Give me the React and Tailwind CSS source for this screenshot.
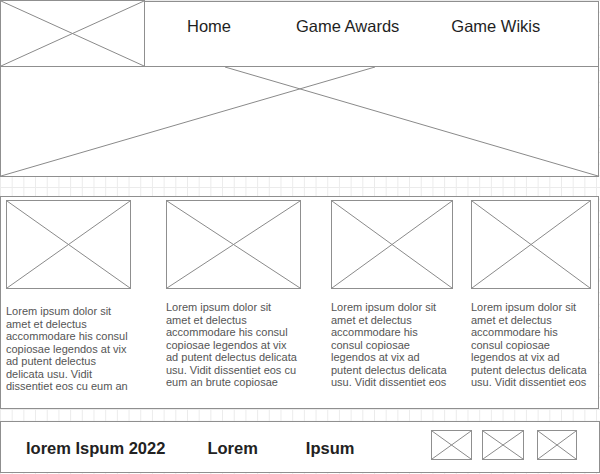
const font = { fontFamily: '"Liberation Sans", Arial, sans-serif' }

function Cross({ stroke = '#8a8a8a' }) {
  return (
    <svg className="absolute inset-0 h-full w-full" viewBox="0 0 100 100" preserveAspectRatio="none">
      <line x1="0" y1="0" x2="100" y2="100" stroke={stroke} strokeWidth="1" vectorEffect="non-scaling-stroke" />
      <line x1="100" y1="0" x2="0" y2="100" stroke={stroke} strokeWidth="1" vectorEffect="non-scaling-stroke" />
    </svg>
  )
}

function Placeholder({ className = '' }) {
  return (
    <div className={`relative shrink-0 border border-[#8f8f8f] bg-white ${className}`}>
      <Cross />
    </div>
  )
}

// wireframe copy, broken where the mockup breaks it
const cards = [
  {
    w: 'w-[125px]',
    ml: 'ml-[5px]',
    textTop: 'mt-[16px]',
    lines: [
      'Lorem ipsum dolor sit',
      'amet et delectus',
      'accommodare his consul',
      'copiosae legendos at vix',
      'ad putent delectus',
      'delicata usu. Vidit',
      'dissentiet eos cu eum an',
    ],
  },
  {
    w: 'w-[135px]',
    ml: 'ml-[35px]',
    textTop: 'mt-[12px]',
    lines: [
      'Lorem ipsum dolor sit',
      'amet et delectus',
      'accommodare his consul',
      'copiosae legendos at vix',
      'ad putent delectus delicata',
      'usu. Vidit dissentiet eos cu',
      'eum an brute copiosae',
    ],
  },
  {
    w: 'w-[122px]',
    ml: 'ml-[30px]',
    textTop: 'mt-[12px]',
    lines: [
      'Lorem ipsum dolor sit',
      'amet et delectus',
      'accommodare his',
      'consul copiosae',
      'legendos at vix ad',
      'putent delectus delicata',
      'usu. Vidit dissentiet eos',
    ],
  },
  {
    w: 'w-[120px]',
    ml: 'ml-[18px]',
    textTop: 'mt-[12px]',
    lines: [
      'Lorem ipsum dolor sit',
      'amet et delectus',
      'accommodare his',
      'consul copiosae',
      'legendos at vix ad',
      'putent delectus delicata',
      'usu. Vidit dissentiet eos',
    ],
  },
]

export default function App() {
  return (
    <div
      style={font}
      className="flex h-[474px] w-[600px] flex-col overflow-hidden bg-white bg-[linear-gradient(to_right,#ebebeb_1px,transparent_1px),linear-gradient(to_bottom,#ebebeb_1px,transparent_1px)] bg-[size:11.7px_11.7px]"
    >
      {/* header */}
      <div className="flex h-[67px] w-[599px] shrink-0">
        <div className="relative w-[145px] border border-[#8f8f8f] bg-white">
          <Cross />
        </div>
        <div className="mt-[1px] flex flex-1 border border-l-0 border-[#8f8f8f] bg-white pl-[42px] pt-[12px] text-[16.5px] text-[#1f1f1f]">
          <span>Home</span>
          <span className="ml-[65px]">Game Awards</span>
          <span className="ml-[52px]">Game Wikis</span>
        </div>
      </div>

      {/* hero */}
      <div className="relative -mt-[1px] h-[111px] w-[599px] shrink-0 border border-[#8f8f8f] bg-white">
        <svg className="absolute inset-0 h-full w-full" viewBox="0 0 597 109" preserveAspectRatio="none">
          <line x1="224" y1="0" x2="597" y2="109" stroke="#8a8a8a" strokeWidth="1" />
          <line x1="374" y1="0" x2="0" y2="109" stroke="#8a8a8a" strokeWidth="1" />
        </svg>
      </div>

      {/* cards */}
      <div className="mt-[19px] flex h-[213px] w-[599px] shrink-0 border border-[#8f8f8f] bg-white pt-[3px]">
        {cards.map((c, i) => (
          <div key={i} className={`flex flex-col ${c.w} ${c.ml}`}>
            <Placeholder className="h-[89px] w-full" />
            <p className={`${c.textTop} whitespace-nowrap text-[11px] leading-[12.5px] text-[#555]`}>
              {c.lines.map((l, j) => (
                <span key={j} className="block">{l}</span>
              ))}
            </p>
          </div>
        ))}
      </div>

      {/* footer */}
      <div className="mt-[12px] flex h-[52px] w-[600px] shrink-0 items-start border border-[#8f8f8f] bg-white text-[16.5px] font-bold text-[#222]">
        <span className="ml-[25px] mt-[14px]">lorem Ispum 2022</span>
        <span className="ml-[42px] mt-[14px]">Lorem</span>
        <span className="ml-[48px] mt-[14px]">Ipsum</span>
        <Placeholder className="ml-[77px] mt-[8px] h-[30px] w-[41px]" />
        <Placeholder className="ml-[10px] mt-[8px] h-[30px] w-[42px]" />
        <Placeholder className="ml-[13px] mt-[8px] h-[30px] w-[40px]" />
      </div>
    </div>
  )
}
